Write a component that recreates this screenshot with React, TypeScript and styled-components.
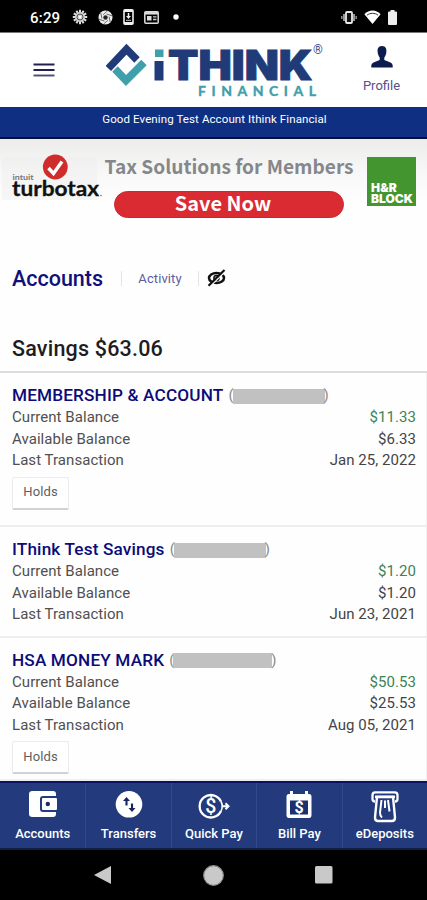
import React from "react";
import styled, { createGlobalStyle } from "styled-components";

const Global = createGlobalStyle`
  *, *::before, *::after { box-sizing: border-box; }
  html, body, #root { margin: 0; height: 100%; }
  body { background: #fff; font-family: Roboto, "Liberation Sans", sans-serif; overflow: hidden; }
  button { font: inherit; border: 0; background: none; padding: 0; margin: 0; }
  svg { display: block; flex: none; }
`;

const Screen = styled.div`
  width: 427px;
  height: 900px;
  display: flex;
  flex-direction: column;
  overflow: hidden;
  background: #fefefe;
`;

const StatusBar = styled.div`
  flex: none;
  height: 33px;
  background: #000;
  border-bottom: 1px solid #777;
  color: #fff;
  display: flex;
  align-items: center;
  justify-content: space-between;
  padding: 2px 29px 0 30px;
`;

const Clock = styled.span`
  font: 500 15px/18px Roboto, sans-serif;
  letter-spacing: 0.2px;
  width: 42px;
  padding-top: 1px;
`;

const StatusGroup = styled.div<{ $gap: number }>`
  display: flex;
  align-items: center;
  gap: ${(p) => p.$gap}px;
`;

const Header = styled.header`
  flex: none;
  height: 74px;
  display: grid;
  grid-template-columns: 106px 1fr 91px;
  background: #fff;
`;

const MenuButton = styled.button`
  display: flex;
  align-items: flex-start;
  padding: 30px 0 0 33px;
`;

const LogoArea = styled.div`
  padding-top: 7px;
`;

const ProfileButton = styled.button`
  display: flex;
  flex-direction: column;
  align-items: center;
  padding-top: 13px;
  color: #55508f;
  font-size: 13px;
  line-height: 16px;
  gap: 10px;
`;

const Greeting = styled.div`
  flex: none;
  height: 32px;
  background: #0f2f83;
  border-bottom: 2px solid #060b3c;
  color: #fff;
  text-align: center;
  font-size: 11.5px;
  line-height: 24px;
  letter-spacing: 0.1px;
  padding-left: 2px;
`;

const Promo = styled.section`
  flex: none;
  height: 111px;
  display: grid;
  grid-template-columns: 105px 248px 1fr;
  background: linear-gradient(#ececeb, #f8f8f8 35px, #fefefe 65px);
`;

const TurboTax = styled.div`
  padding: 13px 0 0 2px;
`;

const PromoCopy = styled.div`
  display: flex;
  flex-direction: column;
  align-items: center;
  padding-top: 14px;
`;

const PromoTitle = styled.div`
  font: 700 19.1px/26px "Noto Sans CJK SC", "Noto Sans", sans-serif;
  color: #85878a;
  white-space: nowrap;
`;

const SaveButton = styled.button`
  margin-top: 12px;
  width: 230px;
  height: 27px;
  border-radius: 14px;
  background: #d92b31;
  border: 1px solid #c62a30;
  color: #fff;
  font: 700 20px/22px "Noto Sans CJK SC", "Noto Sans", sans-serif;
  padding: 0 12px 4px 0;
`;

const HRBlock = styled.div`
  width: 49px;
  height: 49px;
  margin: 18px 0 0 14px;
  padding: 25px 0 0 4px;
  background: #43962f;
  color: #fff;
  font: 900 12px/11px Inter, sans-serif;
`;

const HRLine = styled.div<{ $spacing: number }>`
  letter-spacing: ${(p) => p.$spacing}px;
  white-space: nowrap;
`;

const Tabs = styled.nav`
  flex: none;
  height: 56px;
  display: flex;
  align-items: center;
  padding-left: 12px;
`;

const ActiveTab = styled.span`
  width: 109px;
  font-size: 21.5px;
  font-weight: 500;
  color: #10107a;
`;

const Tab = styled.span`
  width: 76px;
  text-align: center;
  font-size: 13px;
  letter-spacing: 0.1px;
  color: #605c9c;
`;

const TabDivider = styled.i`
  width: 1px;
  height: 15px;
  background: #e4e4e8;
`;

const EyeSlot = styled.span`
  margin-left: 8px;
`;

const GroupTitle = styled.h2`
  flex: none;
  margin: 0;
  height: 67px;
  padding: 30px 0 0 12px;
  font-size: 21.5px;
  line-height: 26px;
  font-weight: 500;
  letter-spacing: 0.2px;
  color: #1d1d1f;
  border-bottom: 2px solid #dcdcdc;
`;

const Account = styled.section<{ $height: number }>`
  flex: none;
  height: ${(p) => p.$height}px;
  padding: 10px 11px 0 12px;
  border-bottom: 2px solid #eee;
  border-right: 1px solid #f1f1f1;
`;

const AccountTitle = styled.h3<{ $spacing: number }>`
  margin: 0;
  height: 24px;
  display: flex;
  align-items: center;
  font-size: 17.2px;
  font-weight: 500;
  color: #0d0b78;
  letter-spacing: ${(p) => p.$spacing}px;
  white-space: nowrap;
`;

const Masked = styled.span<{ $left: number; $width: number }>`
  display: flex;
  align-items: center;
  margin-left: ${(p) => p.$left}px;
  font-size: 15px;
  font-weight: 400;
  letter-spacing: 0;
  color: #8c8c8c;

  &::before { content: "("; }
  &::after { content: ")"; }

  i {
    width: ${(p) => p.$width}px;
    height: 15px;
    margin: 2px -1px 0;
    border-radius: 1px;
    background: #c1c1c1;
  }
`;

const Row = styled.div`
  display: flex;
  justify-content: space-between;
  height: 21.7px;
  line-height: 21.7px;
  font-size: 15px;
  letter-spacing: 0.05px;
  color: #505050;
`;

const Value = styled.span<{ $positive?: boolean }>`
  color: ${(p) => (p.$positive ? "#3d8256" : "#444")};
  margin-right: -1px;
`;

const Holds = styled.button`
  display: block;
  width: 57px;
  height: 33px;
  margin-top: 4.5px;
  padding-bottom: 2px;
  background: #fff;
  border: 1px solid #ebebeb;
  border-bottom: 2px solid #d2d2d2;
  border-radius: 2px;
  font-size: 13px;
  letter-spacing: 0.1px;
  color: #606060;
`;

const BottomNav = styled.nav`
  flex: none;
  height: 69px;
  margin-top: auto;
  display: grid;
  grid-template-columns: repeat(5, 1fr);
  background: #233b7c;
  border-top: 2px solid #0b105f;
  border-bottom: 2px solid #101f45;
`;

const NavItem = styled.button`
  display: flex;
  flex-direction: column;
  align-items: center;
  padding-top: 6px;
  color: #fff;
  font-size: 13px;
  line-height: 16px;
  font-weight: 500;
  white-space: nowrap;

  & + & { border-left: 1px solid #34498a; }
`;

const NavGlyph = styled.span`
  height: 37px;
  padding-top: 2px;
`;

const SystemNav = styled.div`
  flex: none;
  height: 50px;
  background: #000;
  display: flex;
  align-items: center;
  justify-content: space-between;
  padding: 0 94px;
`;

const GearIcon = () => (
  <svg width="16" height="16" viewBox="0 0 16 16">
    <g stroke="#ddd" strokeWidth="2">
      {[0, 30, 60, 90, 120, 150].map((a) => (
        <path key={a} d="M8 .8V15.2" transform={`rotate(${a} 8 8)`} />
      ))}
    </g>
    <circle cx="8" cy="8" r="5" fill="#ccc" />
    <circle cx="8" cy="8" r="3" fill="none" stroke="#555" strokeWidth="1" />
    <circle cx="8" cy="8" r="1.3" fill="#fff" />
  </svg>
);

const ApertureIcon = () => (
  <svg width="15" height="15" viewBox="0 0 15 15">
    <circle cx="7.5" cy="7.5" r="7" fill="#eee" />
    <g stroke="#555" strokeWidth=".8">
      {[0, 60, 120, 180, 240, 300].map((a) => (
        <path key={a} d="M5 4.8L9.5 .8" transform={`rotate(${a} 7.5 7.5)`} />
      ))}
    </g>
    <circle cx="7.5" cy="7.5" r="2.2" fill="#222" />
  </svg>
);

const PhoneDownIcon = () => (
  <svg width="11" height="16" viewBox="0 0 11 16">
    <rect x="1" y=".8" width="9" height="14.4" rx="1" fill="none" stroke="#eee" strokeWidth="1.6" />
    <path d="M1 2h9M1 14h9" stroke="#eee" strokeWidth="2" />
    <path d="M5.5 4v4" stroke="#eee" strokeWidth="1.5" />
    <path d="M3 7h5L5.5 10z" fill="#eee" />
    <path d="M3 11.3h5" stroke="#ccc" />
  </svg>
);

const NewsIcon = () => (
  <svg width="15" height="13" viewBox="0 0 15 13">
    <rect x=".8" y=".8" width="13.4" height="11.4" rx="1" fill="none" stroke="#ddd" strokeWidth="1.5" />
    <path d="M1 2.3h13" stroke="#ddd" strokeWidth="2.5" />
    <rect x="3" y="5" width="4.5" height="4.5" fill="#ddd" />
    <path d="M9 5.8h3.5M9 8.5h3.5" stroke="#ccc" strokeWidth="1.3" />
  </svg>
);

const DotIcon = () => (
  <svg width="10" height="6"><circle cx="7" cy="3" r="2.7" fill="#fff" /></svg>
);

const VibrateIcon = () => (
  <svg width="16" height="13" viewBox="0 0 16 13">
    <rect x="5" y="1" width="6" height="11" rx="1" fill="#111" stroke="#e8e8e8" strokeWidth="1.8" />
    <path d="M3 3v7M13 3v7" stroke="#bbb" strokeWidth="1.6" />
    <path d="M.8 5v3M15.2 5v3" stroke="#999" strokeWidth="1.4" />
  </svg>
);

const WifiIcon = () => (
  <svg width="17" height="14" viewBox="0 0 17 14">
    <path d="M8.5 14L.4 4.2C5 -.6 12 -.6 16.6 4.2z" fill="#fff" />
    <path d="M3 5.2C6 2.7 11 2.7 14 5.2" fill="none" stroke="#333" strokeWidth="1" />
  </svg>
);

const BatteryIcon = () => (
  <svg width="10" height="15" viewBox="0 0 10 15">
    <path d="M2.5 0h4v1.500H8q1 0 1 1V14q0 1-1 1H1q-1 0-1-1V2.500q0-1 1-1h1.500z" fill="#eee" />
  </svg>
);

const MenuIcon = () => (
  <svg width="22" height="14" viewBox="0 0 22 14">
    <path d="M.5 1.5h21M.5 7h21" stroke="#22204f" strokeWidth="1.9" />
    <path d="M.5 12.5h21" stroke="#4a4978" strokeWidth="1.9" />
  </svg>
);

const Logo = () => (
  <svg width="222" height="62" viewBox="106 40 222 62">
    <path d="M108.300 68.500L126.500 49.200 137 60" fill="none" stroke="#213b78" strokeWidth="7.600" />
    <path d="M115 69L126 80.500 144 62.500" fill="none" stroke="#3f9fab" strokeWidth="7.600" />
    <rect x="155" y="49.500" width="8.500" height="7.500" fill="#3f9fab" />
    <rect x="154.500" y="61" width="9" height="19.500" fill="#213b78" />
    <text x="168" y="80" textLength="144.500" lengthAdjust="spacingAndGlyphs" fill="#213b78" stroke="#213b78" strokeWidth="1" fontFamily="Inter" fontWeight="900" fontSize="41.500">THINK</text>
    <text x="198" y="95.500" textLength="118" lengthAdjust="spacing" fill="#3f9fab" stroke="#3f9fab" strokeWidth=".4" fontFamily="Lato" fontWeight="700" fontSize="14">FINANCIAL</text>
    <text x="313" y="54" fill="#3d5390" fontFamily="Roboto" fontWeight="500" fontSize="12.500">®</text>
  </svg>
);

const ProfileIcon = () => (
  <svg width="22" height="22" viewBox="0 0 22 22">
    <path d="M11 0C15 0 15.800 3 15.300 6.500 15 9 14 10.500 13.300 11.500V14L19.500 16.500Q21.700 17.500 21.700 19.500V21.500H.3V19.500Q.3 17.500 2.500 16.500L8.700 14V11.500C8 10.500 7 9 6.700 6.500 6.200 3 7 0 11 0Z" fill="#0d1c4e" />
  </svg>
);

const TurboTaxLogo = () => (
  <svg width="103" height="50" viewBox="2 152 103 50">
    <rect x="2" y="157" width="95" height="43" fill="#eee" opacity=".45" />
    <circle cx="55.300" cy="167" r="12.400" fill="#cf2c2b" />
    <path d="M48.500 168L53.500 173.500 62 161.500" fill="none" stroke="#fff" strokeWidth="3.400" />
    <text x="12.500" y="180" textLength="21" lengthAdjust="spacingAndGlyphs" fontFamily="Lato" fontSize="8" fontWeight="700" fill="#777">intuit</text>
    <text x="12" y="196" textLength="87" lengthAdjust="spacingAndGlyphs" fontFamily="Lato" fontSize="21" fontWeight="700" fill="#111" stroke="#111" strokeWidth=".3">turbotax</text>
    <circle cx="101" cy="195.500" r=".8" fill="#777" />
  </svg>
);

const HiddenEyeIcon = () => (
  <svg width="19" height="18" viewBox="0 0 19 18">
    <ellipse cx="9.5" cy="9" rx="7.5" ry="5" fill="none" stroke="#111" strokeWidth="2.500" />
    <circle cx="9.5" cy="9" r="2.600" fill="none" stroke="#111" strokeWidth="1.500" />
    <path d="M3 17.500L18 2.800" stroke="#fff" strokeWidth="1.300" />
    <path d="M1.500 16.800L17.500 1" stroke="#111" strokeWidth="2.200" />
  </svg>
);

const WalletIcon = () => (
  <svg width="28" height="27" viewBox="0 0 28 27">
    <path d="M3.500 0H24Q27 0 27 3V5H14Q11 5 11 8V18Q11 21 14 21H27V23Q27 26 24 26H3.500Q0 26 0 23V3Q0 0 3.500 0Z" fill="#fff" />
    <rect x="13" y="7" width="15" height="12" rx="1" fill="#fff" />
    <circle cx="18.800" cy="13" r="2.200" fill="#1c2c69" />
  </svg>
);

const TransferIcon = () => (
  <svg width="28" height="27" viewBox="0 0 28 27">
    <circle cx="14" cy="13.300" r="13.300" fill="#fff" />
    <path d="M11.500 14.500V8M17 12.500V19" stroke="#17265f" strokeWidth="2.100" />
    <path d="M8 10L11.500 6 15 10ZM13.500 17L17 21 20.500 17Z" fill="#17265f" />
  </svg>
);

const QuickPayIcon = () => (
  <svg width="32" height="30" viewBox="0 0 32 30">
    <path d="M23 10.500A11.200 11.200 0 1 0 23 20" fill="none" stroke="#fff" strokeWidth="2.300" />
    <path d="M23 10.500Q25.500 15.200 23 20" fill="none" stroke="#fff" strokeWidth="1.600" />
    <text x="12.800" y="22" textAnchor="middle" fill="#fff" fontFamily="Roboto" fontWeight="500" fontSize="19.500">$</text>
    <path d="M24 15.200H30M27.500 12.200L30.500 15.200 27.500 18.200" fill="none" stroke="#fff" strokeWidth="2" />
  </svg>
);

const BillPayIcon = () => (
  <svg width="26" height="27" viewBox="0 0 26 27">
    <path d="M3 3H4V0H7V3H19V0H22V3H23Q25.500 3 25.500 5.500V24Q25.500 27 23 27H3Q.5 27 .5 24V5.500Q.5 3 3 3Z" fill="#fff" />
    <rect x="4" y="9.500" width="18" height="14" fill="#1c2f70" />
    <text x="13" y="22.300" textAnchor="middle" fill="#fff" fontFamily="Roboto" fontWeight="700" fontSize="16">$</text>
  </svg>
);

const DepositIcon = () => (
  <svg width="28" height="32" viewBox="0 0 28 32">
    <path d="M4 10.500Q1.500 10.500 1.500 8V4Q1.500 1.300 4.200 1.300H23.800Q26.500 1.300 26.500 4V8Q26.500 10.500 24 10.500" fill="none" stroke="#fff" strokeWidth="2.300" />
    <path d="M6 6H22L24 26.500Q24 30 21 30H7Q4 30 4 26.500Z" fill="#233b7c" stroke="#fff" strokeWidth="2.400" />
    <path d="M4 5.800H24" stroke="#fff" strokeWidth="2.500" />
    <path d="M10.500 9L9 21.500Q9 25 11 26.500M14 9.500V17M17 9L18.500 20.500" fill="none" stroke="#fff" strokeWidth="2" />
  </svg>
);

const accounts = [
  { name: "MEMBERSHIP & ACCOUNT", spacing: 0.15, gap: 5, mask: 92, height: 154, current: "$11.33", available: "$6.33", date: "Jan 25, 2022", holds: true },
  { name: "IThink Test Savings", spacing: 0.15, gap: 5, mask: 92, height: 110.6, current: "$1.20", available: "$1.20", date: "Jun 23, 2021", holds: false },
  { name: "HSA MONEY MARK", spacing: 0.15, gap: 5, mask: 99, height: 143, current: "$50.53", available: "$25.53", date: "Aug 05, 2021", holds: true },
];

const navItems = [
  { label: "Accounts", icon: <WalletIcon /> },
  { label: "Transfers", icon: <TransferIcon /> },
  { label: "Quick Pay", icon: <QuickPayIcon /> },
  { label: "Bill Pay", icon: <BillPayIcon /> },
  { label: "eDeposits", icon: <DepositIcon /> },
];

export default function App() {
  return (
    <Screen>
      <Global />
      <StatusBar>
        <StatusGroup $gap={0}>
          <Clock>6:29</Clock>
          <StatusGroup $gap={10}>
            <GearIcon />
            <ApertureIcon />
            <PhoneDownIcon />
            <NewsIcon />
            <DotIcon />
          </StatusGroup>
        </StatusGroup>
        <StatusGroup $gap={7}>
          <VibrateIcon />
          <WifiIcon />
          <BatteryIcon />
        </StatusGroup>
      </StatusBar>

      <Header>
        <MenuButton aria-label="Menu"><MenuIcon /></MenuButton>
        <LogoArea><Logo /></LogoArea>
        <ProfileButton><ProfileIcon />Profile</ProfileButton>
      </Header>

      <Greeting>Good Evening Test Account Ithink Financial</Greeting>

      <Promo>
        <TurboTax><TurboTaxLogo /></TurboTax>
        <PromoCopy>
          <PromoTitle>Tax Solutions for Members</PromoTitle>
          <SaveButton>Save Now</SaveButton>
        </PromoCopy>
        <HRBlock>
          <HRLine $spacing={0.2}>H&amp;R</HRLine>
          <HRLine $spacing={0}>BLOCK</HRLine>
        </HRBlock>
      </Promo>

      <Tabs>
        <ActiveTab>Accounts</ActiveTab>
        <TabDivider />
        <Tab>Activity</Tab>
        <TabDivider />
        <EyeSlot><HiddenEyeIcon /></EyeSlot>
      </Tabs>

      <GroupTitle>Savings $63.06</GroupTitle>

      {accounts.map((a) => (
        <Account key={a.name} $height={a.height}>
          <AccountTitle $spacing={a.spacing}>
            {a.name}
            <Masked $left={a.gap} $width={a.mask}><i /></Masked>
          </AccountTitle>
          <Row>Current Balance<Value $positive>{a.current}</Value></Row>
          <Row>Available Balance<Value>{a.available}</Value></Row>
          <Row>Last Transaction<Value>{a.date}</Value></Row>
          {a.holds && <Holds>Holds</Holds>}
        </Account>
      ))}

      <BottomNav>
        {navItems.map((n) => (
          <NavItem key={n.label}>
            <NavGlyph>{n.icon}</NavGlyph>
            {n.label}
          </NavItem>
        ))}
      </BottomNav>

      <SystemNav>
        <svg width="17" height="18"><path d="M17 0V18L0 9Z" fill="#c9c9c9" /></svg>
        <svg width="21" height="21"><circle cx="10.5" cy="10.5" r="9.800" fill="#c9c9c9" stroke="#8d8d8d" strokeWidth="1.200" /></svg>
        <svg width="18" height="18"><rect width="17.500" height="17.500" rx="1.500" fill="#c9c9c9" /></svg>
      </SystemNav>
    </Screen>
  );
}
